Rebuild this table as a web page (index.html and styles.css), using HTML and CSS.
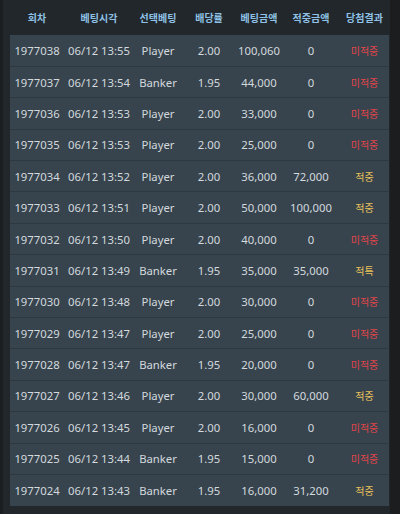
FILE: index.html
```html
<!DOCTYPE html>
<html lang="ko">
<head>
<meta charset="utf-8">
<link rel="stylesheet" href="styles.css">
</head>
<body>
<div class="wrap">
<table class="bets">
<colgroup>
<col class="c1"><col class="c2"><col class="c3"><col class="c4"><col class="c5"><col class="c6"><col class="c7">
</colgroup>
<thead>
<tr><th>회차</th><th>베팅시각</th><th>선택베팅</th><th>배당률</th><th>베팅금액</th><th>적중금액</th><th>당첨결과</th></tr>
</thead>
<tbody>
<tr><td>1977038</td><td>06/12 13:55</td><td>Player</td><td>2.00</td><td>100,060</td><td>0</td><td class="lose">미적중</td></tr>
<tr><td>1977037</td><td>06/12 13:54</td><td>Banker</td><td>1.95</td><td>44,000</td><td>0</td><td class="lose">미적중</td></tr>
<tr><td>1977036</td><td>06/12 13:53</td><td>Player</td><td>2.00</td><td>33,000</td><td>0</td><td class="lose">미적중</td></tr>
<tr><td>1977035</td><td>06/12 13:53</td><td>Player</td><td>2.00</td><td>25,000</td><td>0</td><td class="lose">미적중</td></tr>
<tr><td>1977034</td><td>06/12 13:52</td><td>Player</td><td>2.00</td><td>36,000</td><td>72,000</td><td class="win">적중</td></tr>
<tr><td>1977033</td><td>06/12 13:51</td><td>Player</td><td>2.00</td><td>50,000</td><td>100,000</td><td class="win">적중</td></tr>
<tr><td>1977032</td><td>06/12 13:50</td><td>Player</td><td>2.00</td><td>40,000</td><td>0</td><td class="lose">미적중</td></tr>
<tr><td>1977031</td><td>06/12 13:49</td><td>Banker</td><td>1.95</td><td>35,000</td><td>35,000</td><td class="win">적특</td></tr>
<tr><td>1977030</td><td>06/12 13:48</td><td>Player</td><td>2.00</td><td>30,000</td><td>0</td><td class="lose">미적중</td></tr>
<tr><td>1977029</td><td>06/12 13:47</td><td>Player</td><td>2.00</td><td>25,000</td><td>0</td><td class="lose">미적중</td></tr>
<tr><td>1977028</td><td>06/12 13:47</td><td>Banker</td><td>1.95</td><td>20,000</td><td>0</td><td class="lose">미적중</td></tr>
<tr><td>1977027</td><td>06/12 13:46</td><td>Player</td><td>2.00</td><td>30,000</td><td>60,000</td><td class="win">적중</td></tr>
<tr><td>1977026</td><td>06/12 13:45</td><td>Player</td><td>2.00</td><td>16,000</td><td>0</td><td class="lose">미적중</td></tr>
<tr><td>1977025</td><td>06/12 13:44</td><td>Banker</td><td>1.95</td><td>15,000</td><td>0</td><td class="lose">미적중</td></tr>
<tr><td>1977024</td><td>06/12 13:43</td><td>Banker</td><td>1.95</td><td>16,000</td><td>31,200</td><td class="win">적중</td></tr>
</tbody>
</table>
</div>
</body>
</html>
```

FILE: styles.css
```css
html, body {
  margin: 0;
  padding: 0;
  background: #1b1d1f;
}
body {
  width: 400px;
  height: 514px;
  overflow: hidden;
  font-family: "Noto Sans", "Noto Sans CJK KR", sans-serif;
}
.wrap {
  margin-left: 3px;
  width: 380px;
  height: 514px;
  padding-left: 7px;
  background: #22272b;
}
.bets {
  width: 379px;
  border-collapse: collapse;
  table-layout: fixed;
}
.c1 { width: 54px; }
.c2 { width: 70px; }
.c3 { width: 48px; }
.c4 { width: 54px; }
.c5 { width: 46px; }
.c6 { width: 58px; }
.c7 { width: 49px; }
.bets th {
  height: 35px;
  padding: 0;
  font-family: "Noto Sans CJK KR", sans-serif;
  font-size: 10px;
  font-weight: 700;
  color: #8fc2e6;
  text-align: center;
  white-space: nowrap;
  vertical-align: middle;
}
.bets tbody {
  background: #37444e;
}
.bets td {
  height: 31.4px;
  box-sizing: border-box;
  padding: 0;
  font-size: 11.3px;
  color: #d3d9dd;
  text-align: center;
  white-space: nowrap;
  vertical-align: middle;
  border-top: 1px solid #2d3840;
}
.bets tbody tr:first-child td {
  border-top: none;
}
.bets td.lose {
  font-family: "Noto Sans CJK KR", sans-serif;
  font-size: 10px;
  color: #e0454a;
}
.bets td.win {
  font-family: "Noto Sans CJK KR", sans-serif;
  font-size: 10px;
  color: #e8c15a;
}
```
